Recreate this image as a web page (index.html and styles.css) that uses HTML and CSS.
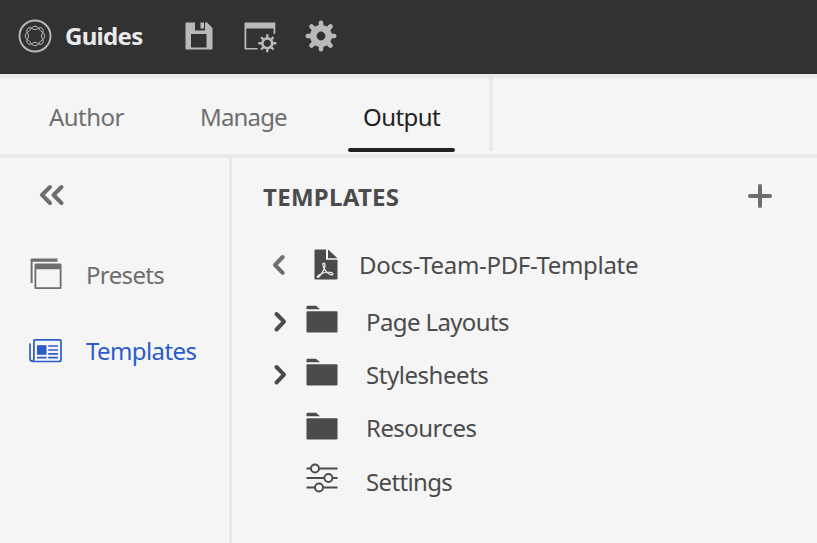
FILE: index.html
```
<!DOCTYPE html>
<html lang="en">
<head>
<meta charset="utf-8">
<title>Guides</title>
<link rel="stylesheet" href="styles.css">
</head>
<body>
<svg width="0" height="0" class="defs">
  <symbol id="folder" viewBox="0 0 32 28"><path d="M.5 3.800V2Q.5.700 1.800.700H9.500Q10.400.700 11 1.400L14 4.300H.5Z"/><rect x=".5" y="6.300" width="31" height="21.300" rx="1"/></symbol>
  <symbol id="chevron" viewBox="0 0 14 22"><path d="M3.500 3 11 10.700 3.500 18.500"/></symbol>
</svg>
<header class="topbar">
  <svg class="logo" viewBox="0 0 34 34">
    <circle cx="17" cy="17" r="15.500" stroke-width="1.900"/>
    <g stroke-width="1">
      <path d="M13 8.800Q17 12.500 21 8.800Q25.500 8 25.200 13Q21.800 17 25.200 21Q25.500 26 21 25.200Q17 21.500 13 25.200Q8.500 26 8.800 21Q12.200 17 8.800 13Q8.500 8 13 8.800Z"/>
      <path d="M17 7.200Q19.500 7.200 21 9.800Q22.200 11.800 24.200 13Q26.800 14.500 26.800 17T24.200 21Q22.200 22.200 21 24.200Q19.500 26.800 17 26.800T13 24.200Q11.800 22.200 9.800 21Q7.200 19.500 7.200 17T9.800 13Q11.800 11.800 13 9.800Q14.500 7.200 17 7.200Z"/>
    </g>
  </svg>
  <span class="brand">Guides</span>
  <svg class="save" viewBox="0 0 28 28"><path fill-rule="evenodd" d="M1.500.5H10V8.500H20V.5H22L27.500 6V26.500Q27.500 27.500 26.500 27.500H1.500Q.5 27.500.5 26.500V1.500Q.5.500 1.500.5ZM6 12V25.500H21.500V12Z"/><path d="M15.500.5H19V6.500H15.500Z"/></svg>
  <svg class="wingear" viewBox="0 0 34 32">
    <path d="M1.200.5H31.300V11.500L29.600 12.500V6.500H2.300V26H13.600V27.500H1.200Q.5 27.500.5 26.700V1.200Q.5.500 1.200.5Z"/>
    <g transform="translate(23.300 21.300)"><circle r="4.900" class="ring"/><path class="teeth" d="M0-9V-5M0 9V5M-9 0H-5M9 0H5M-6.200-6.200-3.800-3.800M6.200 6.200 3.800 3.800M6.200-6.200 3.800-3.800M-6.200 6.200-3.800 3.800"/></g>
  </svg>
  <svg class="gear" viewBox="-16 -16 32 32"><circle r="7.700" class="ring"/><path class="teeth" d="M0-13.200V-9M0 13.200V9M-13.200 0H-9M13.200 0H9M-9.500-9.500-6.500-6.500M9.500 9.500 6.500 6.500M9.500-9.500 6.500-6.500M-9.500 9.500-6.500 6.500"/></svg>
</header>
<nav class="tabs">
  <a class="tab author">Author</a>
  <a class="tab manage">Manage</a>
  <a class="tab active">Output</a>
  <span class="divider"></span>
</nav>
<div class="content">
  <aside class="sidebar">
    <svg class="collapse" viewBox="0 0 26 22"><path d="M11 3 3 11 11 19M22.500 3 14.500 11 22.500 19"/></svg>
    <a class="side presets">
      <svg viewBox="0 0 34 32"><path class="fill" d="M1.500.5H27.500V3.800H2.600V25H1.400Q.6 25 .6 24.200V1.400Q.6.500 1.500.5Z"/><path class="fill" fill-rule="evenodd" d="M5.500 5.500H30.500Q31.500 5.500 31.500 6.500V30Q31.500 31 30.500 31H5.500Q4.500 31 4.500 30V6.500Q4.500 5.500 5.500 5.500ZM6.300 11.200V29.200H29.700V11.200Z"/></svg>
      <span>Presets</span>
    </a>
    <a class="side templates">
      <svg viewBox="0 0 34 26"><path class="line" d="M1 5.500V20.500Q1 23.500 4 23.500H30Q32 23.500 32 21.500V3Q32 1.800 30.800 1.800H6Q4.900 1.800 4.900 3V20.500Q4.900 23.500 3 23.500"/><path class="fill" d="M8 7.200H17.500V16.800H8Z"/><path class="line" d="M19.200 8H29M19.200 12H29M19.200 15.900H29M19.200 19.700H29M8 19.700H17.500"/></svg>
      <span>Templates</span>
    </a>
  </aside>
  <main class="panel">
    <div class="heading"><h1>TEMPLATES</h1><svg class="plus" viewBox="0 0 24 24"><path d="M12 2V22M2 12H22"/></svg></div>
    <div class="row document">
      <svg class="chev back" viewBox="0 0 14 22"><path d="M10.700 3 3 11 10.700 18.800"/></svg>
      <svg class="pdf" viewBox="0 0 24 31"><path d="M1.500.5H12V10.800H23.500V29.500Q23.500 30.500 22.500 30.500H1.500Q.5 30.500.5 29.500V1.500Q.5.500 1.500.5ZM14 .5 23.500 9.200H14Z"/><path class="mark" d="M9.900 14C8 13.800 9 17.500 10.500 20C12 22.800 14.500 25.500 17.500 25.800C19.800 26 19 23.500 16.500 23.300C12 23 7 24.500 4.500 26.400C2.300 28.200 3.700 29.200 5.200 27.600C8.500 24.500 11.800 17.500 10.900 14.700Q10.600 14 9.900 14Z"/></svg>
      <span class="label doc">Docs-Team-PDF-Template</span>
    </div>
    <div class="row"><svg class="chev"><use href="#chevron"/></svg><svg class="folder"><use href="#folder"/></svg><span class="label pages">Page Layouts</span></div>
    <div class="row"><svg class="chev"><use href="#chevron"/></svg><svg class="folder"><use href="#folder"/></svg><span class="label sheets">Stylesheets</span></div>
    <div class="row"><span class="chev"></span><svg class="folder"><use href="#folder"/></svg><span class="label resources">Resources</span></div>
    <div class="row"><span class="chev"></span><svg class="sliders" viewBox="0 0 32 30"><path d="M.5 5.500H5M13 5.500H31.500M.5 15H18M27 15H31.500M.5 24.500H9M17 24.500H31.500"/><circle cx="9" cy="5.500" r="4"/><circle cx="22.400" cy="15" r="4"/><circle cx="13" cy="24.500" r="4"/></svg><span class="label settings">Settings</span></div>
  </main>
</div>
</body>
</html>
```
FILE: styles.css
```
* { box-sizing: border-box; }
body {
  margin: 0;
  height: 543px;
  display: flex;
  flex-direction: column;
  overflow: hidden;
  background: #f5f5f5;
  color: #4b4b4b;
  font: 24px/36px "Noto Sans", "Open Sans", sans-serif;
  white-space: nowrap;
}
svg { display: block; flex: none; }
.defs { display: none; }
.topbar {
  height: 78px;
  flex: none;
  display: flex;
  align-items: center;
  padding: 0 0 2px 18px;
  background: #323232;
  border-bottom: 4px solid #e9e9e9;
  fill: #b9b9b9;
}
.logo { width: 34px; height: 34px; fill: none; stroke: #b9b9b9; }
.brand { width: 133px; padding-left: 13px; font-weight: 700; letter-spacing: -0.7px; color: #eaeaea; }
.save { width: 28px; height: 28px; }
.wingear { width: 34px; height: 32px; margin: 4px 0 0 31px; }
.gear { width: 32px; height: 32px; margin-left: 27px; }
.ring { fill: none; stroke: #b9b9b9; stroke-width: 6.600; }
.teeth { fill: none; stroke: #b9b9b9; stroke-width: 4.600; stroke-linecap: round; }
.wingear .ring { stroke-width: 2.600; }
.wingear .teeth { stroke-width: 2.400; stroke-linecap: butt; }
.tabs {
  height: 80px;
  flex: none;
  display: flex;
  padding-left: 49px;
  border-bottom: 4px solid #e9e9e9;
  color: #6e6e6e;
}
.tab { height: 74px; padding-top: 21px; }
.author { width: 151px; letter-spacing: -0.550px; }
.manage { width: 148px; letter-spacing: -0.850px; }
.active {
  width: 107px;
  display: flex;
  flex-direction: column;
  justify-content: space-between;
  padding-left: 0;
  text-indent: 15px;
  letter-spacing: -0.550px;
  color: #222;
}
.active::after { content: ""; height: 4px; border-radius: 2px; background: #222; }
.divider { width: 4px; height: 73px; margin-left: 34px; background: #e9e9e9; }
.content { flex: 1; display: flex; }
.sidebar { width: 232px; border-right: 3px solid #e9e9e9; color: #6e6e6e; }
.collapse { width: 26px; height: 22px; margin: 26px 0 0 39px; fill: none; stroke: #6e6e6e; stroke-width: 4; stroke-linecap: round; stroke-linejoin: round; }
.side { display: flex; align-items: center; height: 36px; padding-left: 29px; }
.side svg { width: 34px; margin-right: 23px; }
.presets { margin-top: 51px; letter-spacing: -0.650px; }
.presets svg { height: 32px; margin: -2px 22px 0 1px; }
.templates { margin-top: 40px; letter-spacing: -0.600px; color: #2c5ccc; }
.templates svg { height: 26px; margin-top: -1px; }
.fill { fill: currentColor; }
.line { fill: none; stroke: currentColor; stroke-width: 1.700; }
.panel { flex: 1; padding: 21px 45px 0 31px; }
.heading { display: flex; justify-content: space-between; align-items: center; height: 36px; }
h1 { margin: 0; font: inherit; font-weight: 700; letter-spacing: 0.300px; }
.plus { width: 24px; height: 24px; margin-top: -2px; stroke: #6e6e6e; stroke-width: 4; stroke-linecap: round; }
.row { display: flex; align-items: center; height: 53.300px; fill: #4b4b4b; }
.document { height: 57px; margin: 21px 0 2px; }
.chev { width: 14px; height: 22px; margin-left: 10px; fill: none; stroke: #4b4b4b; stroke-width: 4; stroke-linecap: round; stroke-linejoin: round; }
.back { margin-left: 9px; stroke: #6e6e6e; }
.pdf { width: 24px; height: 31px; margin: 0 21px 0 28px; }
.mark { fill: none; stroke: #f5f5f5; stroke-width: 1.200; }
.folder { width: 32px; height: 28px; margin: 0 28px 5px 19px; }
.sliders { width: 32px; height: 30px; margin: 0 28px 7px 19px; fill: none; stroke: #4b4b4b; stroke-width: 1.900; }
.doc { letter-spacing: -0.320px; }
.pages { letter-spacing: -0.620px; }
.sheets { letter-spacing: -0.450px; }
.resources { letter-spacing: -0.550px; }
.settings { letter-spacing: -0.650px; }
```
